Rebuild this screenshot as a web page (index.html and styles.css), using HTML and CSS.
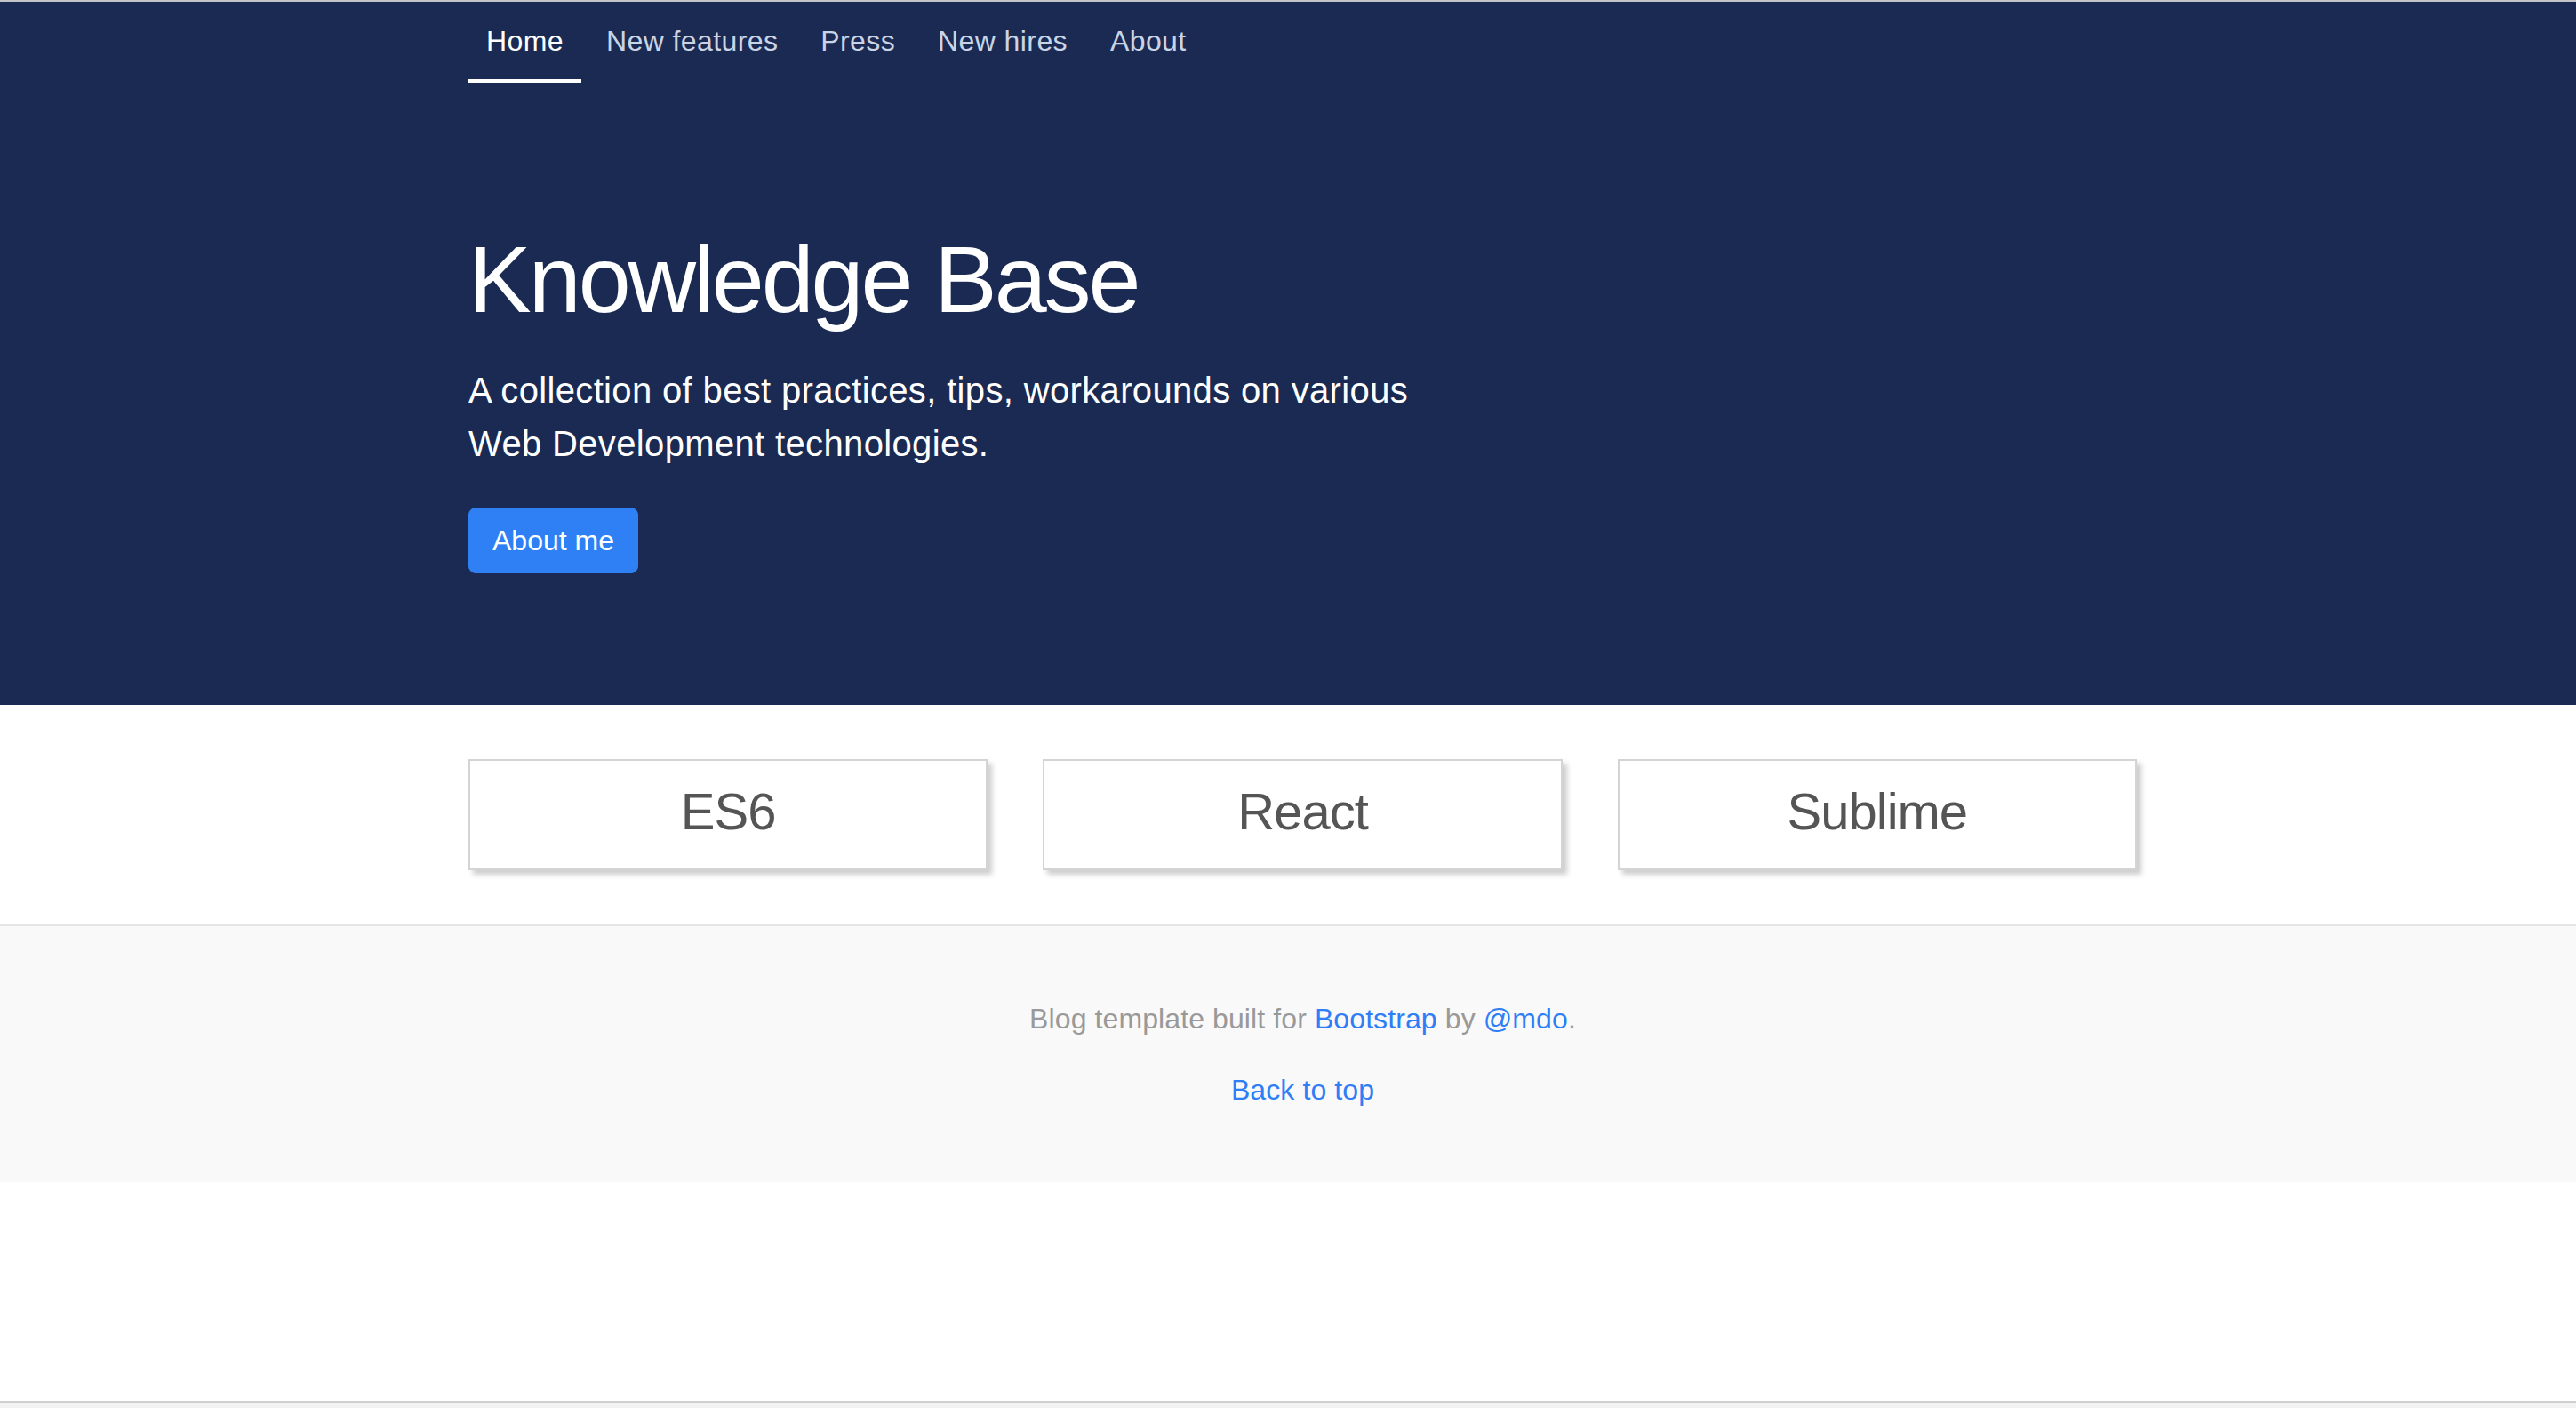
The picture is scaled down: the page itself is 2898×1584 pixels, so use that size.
FILE: index.html
```html
<!DOCTYPE html>
<html lang="en">
<head>
<meta charset="utf-8">
<title>Knowledge Base</title>
<link rel="stylesheet" href="styles.css">
</head>
<body>
<div class="page">
  <header class="masthead">
    <nav class="container">
      <ul class="nav">
        <li><a class="nav-link active" href="#">Home</a></li>
        <li><a class="nav-link" href="#">New features</a></li>
        <li><a class="nav-link" href="#">Press</a></li>
        <li><a class="nav-link" href="#">New hires</a></li>
        <li><a class="nav-link" href="#">About</a></li>
      </ul>
    </nav>
    <div class="container hero">
      <h1 class="hero-title">Knowledge Base</h1>
      <p class="lead">A collection of best practices, tips, workarounds on various Web Development technologies.</p>
      <a class="btn" href="#">About me</a>
    </div>
  </header>

  <main class="topics">
    <div class="container cards">
      <div class="card"><h2>ES6</h2></div>
      <div class="card"><h2>React</h2></div>
      <div class="card"><h2>Sublime</h2></div>
    </div>
  </main>

  <footer class="footer">
    <div class="container footer-inner">
      <p>Blog template built for <a href="#">Bootstrap</a> by <a href="#">@mdo</a>.</p>
      <p><a href="#">Back to top</a></p>
    </div>
  </footer>

  <div class="spacer"></div>
  <div class="bottom-bar"></div>
</div>
</body>
</html>
```

FILE: styles.css
```css
* { box-sizing: border-box; }

html, body {
  margin: 0;
  padding: 0;
}

body {
  font-family: "Liberation Sans", Arial, sans-serif;
  color: #212529;
  background: #ffffff;
}

a { text-decoration: none; }

.page {
  min-height: 100vh;
  display: flex;
  flex-direction: column;
  border-top: 2px solid #c2c4c8;
}

.container {
  width: 1877px;
  margin-left: 527px;
}

/* header */
.masthead {
  background: #1a2a52;
}

.nav {
  list-style: none;
  margin: 0;
  padding: 0;
  display: flex;
  gap: 8px;
}

.nav-link {
  display: block;
  padding: 20px 20px 19px;
  font-size: 32px;
  line-height: 48px;
  letter-spacing: 0.4px;
  color: #c9d4e6;
  border-bottom: 4px solid transparent;
}

.nav-link.active {
  color: #ffffff;
  border-bottom-color: #ffffff;
}

.hero {
  padding: 158px 0 148px;
}

.hero-title {
  margin: 0;
  font-size: 106px;
  line-height: 1.2;
  font-weight: 400;
  letter-spacing: -3px;
  color: #ffffff;
}

.lead {
  margin: 31px 0 42px;
  max-width: 1100px;
  font-size: 40px;
  line-height: 60px;
  letter-spacing: 0.35px;
  color: #ffffff;
}

.btn {
  display: inline-block;
  padding: 12px 26px;
  font-size: 32px;
  line-height: 48px;
  color: #ffffff;
  background: #2f80f5;
  border: 1px solid #2f80f5;
  border-radius: 8px;
}

/* cards */
.topics {
  padding: 61px 0;
}

.cards {
  display: grid;
  grid-template-columns: repeat(3, 1fr);
  gap: 62px;
}

.card {
  border: 2px solid #d4d4d4;
  background: #ffffff;
  box-shadow: 5px 5px 6px rgba(0, 0, 0, 0.2);
  padding: 21px 0 28px;
  text-align: center;
}

.card h2 {
  margin: 0;
  font-size: 58px;
  line-height: 72px;
  font-weight: 400;
  letter-spacing: -1px;
  color: #555555;
}

/* footer */
.footer {
  background: #f9f9f9;
  border-top: 2px solid #e5e5e5;
  padding: 80px 0;
}

.footer-inner {
  text-align: center;
}

.footer p {
  margin: 0 0 32px;
  font-size: 32px;
  line-height: 48px;
  letter-spacing: 0.1px;
  color: #999999;
}

.footer p:last-child {
  margin-bottom: 0;
}

.footer a {
  color: #2f7ef5;
}

.spacer {
  flex: 1;
}

.bottom-bar {
  height: 8px;
  border-top: 2px solid #cfcfcf;
  background: #f2f2f2;
}
```
